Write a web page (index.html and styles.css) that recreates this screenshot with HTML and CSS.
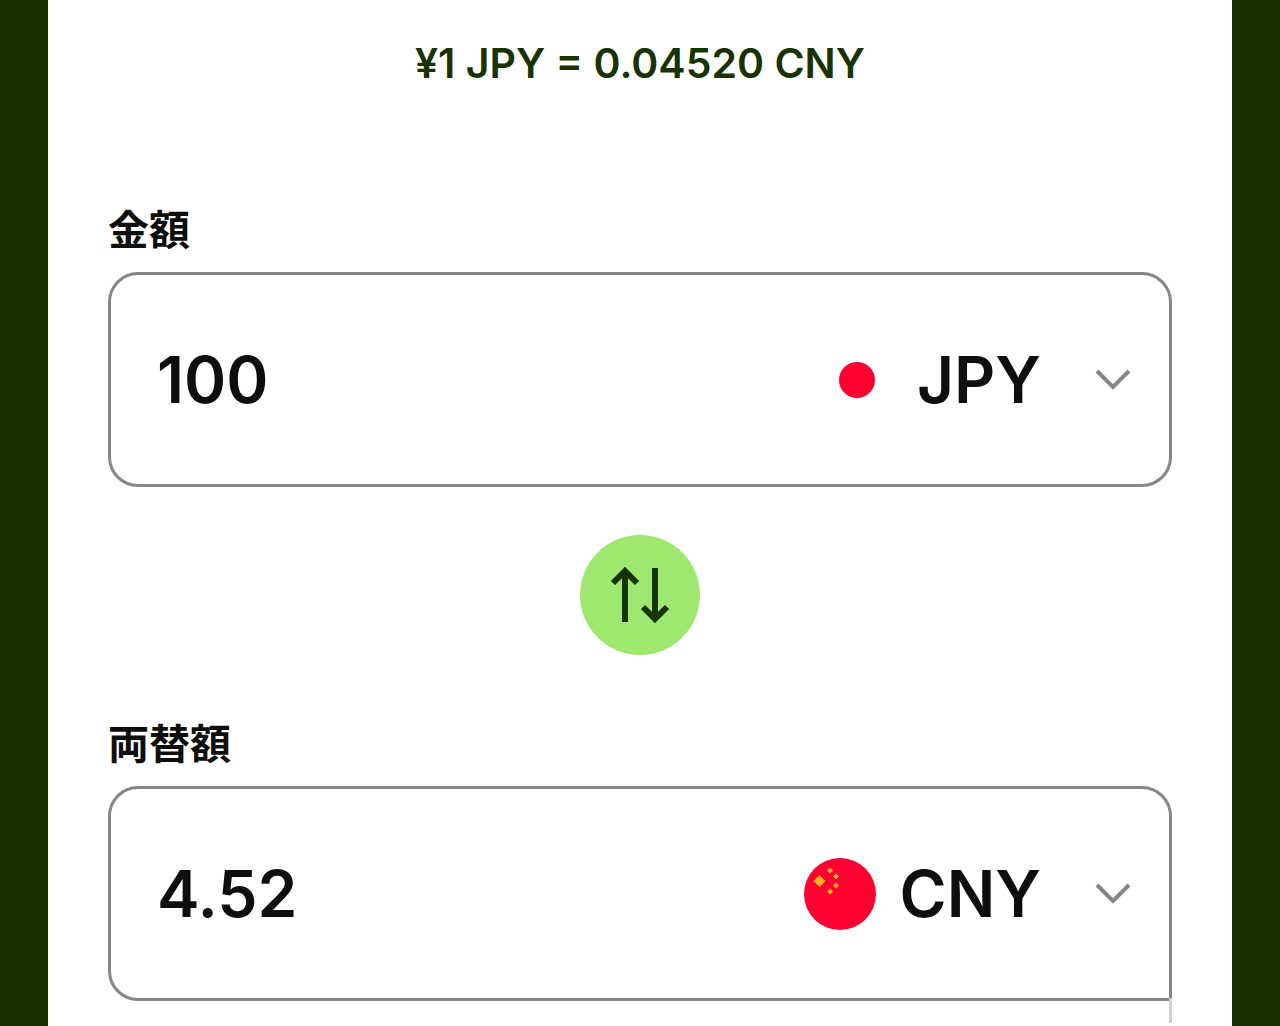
FILE: index.html
```html
<!DOCTYPE html>
<html lang="ja">
<head>
  <meta charset="utf-8">
  <meta name="viewport" content="width=device-width, initial-scale=1">
  <title>JPY / CNY</title>
  <link rel="stylesheet" href="styles.css">
</head>
<body>
  <main class="panel">
    <p class="rate">¥1 JPY = 0.04520 CNY</p>

    <form class="converter">
      <label class="field-label" for="amount">金額</label>
      <div class="field">
        <input class="amount" id="amount" type="text" inputmode="decimal" value="100">
        <svg class="flag" viewBox="0 0 72 72" aria-hidden="true">
          <circle cx="36" cy="36" r="36" fill="#fff"/>
          <circle cx="36" cy="36" r="18" fill="#ff0030"/>
        </svg>
        <select class="currency" aria-label="JPY">
          <option selected>JPY</option>
          <option>CNY</option>
        </select>
        <svg class="chevron" viewBox="0 0 36 22" aria-hidden="true">
          <path d="M2 2l16 16L34 2"/>
        </svg>
      </div>

      <button class="swap" type="button" aria-label="JPY / CNY">
        <svg viewBox="0 0 60 56" aria-hidden="true">
          <path d="M15 55V5M3 16L15 4L27 16M45 1v50M33 40L45 52L57 40"/>
        </svg>
      </button>

      <label class="field-label" for="converted">両替額</label>
      <div class="field field-converted">
        <input class="amount" id="converted" type="text" inputmode="decimal" value="4.52">
        <svg class="flag" viewBox="0 0 72 72" aria-hidden="true">
          <circle cx="36" cy="36" r="36" fill="#ff0030"/>
          <g fill="#ffb41f">
            <path d="M15.500 17l6 6l-6 6l-6-6z"/>
            <path d="M26 9.500l3 3l-3 3l-3-3zM32 15.500l3 3l-3 3l-3-3zM32 24.500l3 3l-3 3l-3-3zM26 30.500l3 3l-3 3l-3-3z"/>
          </g>
        </svg>
        <select class="currency" aria-label="CNY">
          <option>JPY</option>
          <option selected>CNY</option>
        </select>
        <svg class="chevron" viewBox="0 0 36 22" aria-hidden="true">
          <path d="M2 2l16 16L34 2"/>
        </svg>
      </div>
    </form>
  </main>
</body>
</html>
```
FILE: styles.css
```css
* {
  box-sizing: border-box;
}

body {
  margin: 0;
  padding: 0 48px;
  background: #183300;
  color: #0e0f0c;
  font-family: Inter, "Noto Sans CJK JP", sans-serif;
  font-weight: 600;
}

.panel {
  min-height: 100vh;
  padding: 33px 60px 0;
  background: #fff;
}

.rate {
  margin: 0 0 107px;
  color: #183300;
  font-size: 41px;
  line-height: 60px;
  text-align: center;
}

.converter {
  display: flex;
  flex-direction: column;
}

.field-label {
  margin-bottom: 12px;
  font-size: 41px;
  line-height: 60px;
}

.field {
  display: flex;
  align-items: center;
  height: 215px;
  padding: 0 38px 0 46px;
  border: 3px solid #868685;
  border-radius: 30px;
}

/* the last field runs on into the edge below it */
.field-converted {
  position: relative;
  border-bottom-right-radius: 0;
}

.field-converted::after {
  content: "";
  position: absolute;
  top: 100%;
  right: -3px;
  width: 3px;
  height: 25px;
  background: #d0d0d0;
}

.amount,
.currency {
  padding: 0;
  border: 0;
  background: none;
  color: inherit;
  font: inherit;
  font-size: 64px;
  line-height: 80px;
}

.amount {
  flex: 1;
  min-width: 0;
}

.flag {
  flex: none;
  width: 72px;
  height: 72px;
  margin-right: 24px;
}

.currency {
  appearance: none;
  field-sizing: content;
  cursor: pointer;
}

.chevron {
  flex: none;
  width: 36px;
  height: 22px;
  margin-left: 54px;
  fill: none;
  stroke: #868685;
  stroke-width: 4;
}

.swap {
  display: flex;
  align-items: center;
  justify-content: center;
  align-self: center;
  width: 120px;
  height: 120px;
  margin: 48px 0 59px;
  padding: 0;
  border: 0;
  border-radius: 50%;
  background: #9fe870;
  cursor: pointer;
}

.swap svg {
  width: 60px;
  height: 56px;
  fill: none;
  stroke: #163300;
  stroke-width: 6;
}
```
